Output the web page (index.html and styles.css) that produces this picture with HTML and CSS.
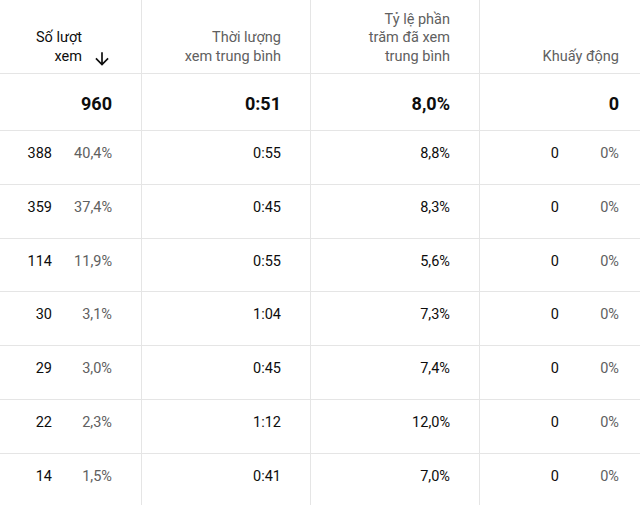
FILE: index.html
```html
<!DOCTYPE html>
<html lang="vi">
<head>
<meta charset="utf-8">
<title>Bảng số liệu</title>
<link rel="stylesheet" href="styles.css">
</head>
<body>
<div class="table">
  <div class="row head">
    <div class="cell sorted">
      <span class="htext">Số lượt<br>xem</span>
      <svg class="arrow" viewBox="0 0 24 24" aria-hidden="true"><path d="M20 12l-1.41-1.41L13 16.17V4h-2v12.17l-5.58-5.59L4 12l8 8 8-8z"/></svg>
    </div>
    <div class="cell"><span class="htext">Thời lượng<br>xem trung bình</span></div>
    <div class="cell"><span class="htext">Tỷ lệ phần<br>trăm đã xem<br>trung bình</span></div>
    <div class="cell"><span class="htext">Khuấy động</span></div>
  </div>
  <div class="row total">
    <div class="cell">960</div>
    <div class="cell">0:51</div>
    <div class="cell">8,0%</div>
    <div class="cell">0</div>
  </div>
  <div class="row data">
    <div class="cell"><span class="num">388</span><span class="pct">40,4%</span></div>
    <div class="cell">0:55</div>
    <div class="cell">8,8%</div>
    <div class="cell"><span class="num">0</span><span class="pct">0%</span></div>
  </div>
  <div class="row data">
    <div class="cell"><span class="num">359</span><span class="pct">37,4%</span></div>
    <div class="cell">0:45</div>
    <div class="cell">8,3%</div>
    <div class="cell"><span class="num">0</span><span class="pct">0%</span></div>
  </div>
  <div class="row data">
    <div class="cell"><span class="num">114</span><span class="pct">11,9%</span></div>
    <div class="cell">0:55</div>
    <div class="cell">5,6%</div>
    <div class="cell"><span class="num">0</span><span class="pct">0%</span></div>
  </div>
  <div class="row data">
    <div class="cell"><span class="num">30</span><span class="pct">3,1%</span></div>
    <div class="cell">1:04</div>
    <div class="cell">7,3%</div>
    <div class="cell"><span class="num">0</span><span class="pct">0%</span></div>
  </div>
  <div class="row data">
    <div class="cell"><span class="num">29</span><span class="pct">3,0%</span></div>
    <div class="cell">0:45</div>
    <div class="cell">7,4%</div>
    <div class="cell"><span class="num">0</span><span class="pct">0%</span></div>
  </div>
  <div class="row data">
    <div class="cell"><span class="num">22</span><span class="pct">2,3%</span></div>
    <div class="cell">1:12</div>
    <div class="cell">12,0%</div>
    <div class="cell"><span class="num">0</span><span class="pct">0%</span></div>
  </div>
  <div class="row data">
    <div class="cell"><span class="num">14</span><span class="pct">1,5%</span></div>
    <div class="cell">0:41</div>
    <div class="cell">7,0%</div>
    <div class="cell"><span class="num">0</span><span class="pct">0%</span></div>
  </div>
</div>
</body>
</html>
```

FILE: styles.css
```css
html, body {
  margin: 0;
  padding: 0;
  background: #ffffff;
  overflow: hidden;
}

body {
  font-family: Roboto, "Noto Sans", "Liberation Sans", sans-serif;
  color: #0d0d0d;
  width: 640px;
  height: 505px;
}

.table {
  width: 649px;
}

.row {
  display: grid;
  grid-template-columns: 142px 169px 169px 169px;
  border-bottom: 1px solid #e5e5e5;
  box-sizing: border-box;
}

.cell {
  box-sizing: border-box;
  border-right: 1px solid #e5e5e5;
  padding-right: 29px;
  display: flex;
  justify-content: flex-end;
}

.head {
  height: 74px;
}

.head .cell {
  align-items: flex-end;
  padding-bottom: 7px;
  font-size: 14.5px;
  line-height: 18.5px;
  color: #606060;
  text-align: right;
}

.head .cell.sorted {
  color: #0d0d0d;
}

.htext {
  display: block;
}

.arrow {
  width: 20px;
  height: 20px;
  margin-left: 10px;
  margin-bottom: -3px;
  fill: #0d0d0d;
  flex: none;
}

.total {
  height: 57px;
}

.total .cell {
  align-items: flex-start;
  padding-top: 18px;
  font-size: 18px;
  line-height: 24px;
  font-weight: 700;
}

.data {
  height: 53.75px;
}

.data .cell {
  align-items: flex-start;
  padding-top: 13px;
  font-size: 14.5px;
  line-height: 20px;
}

.num {
  display: block;
}

.pct {
  display: block;
  width: 60px;
  text-align: right;
  color: #606060;
}
```
